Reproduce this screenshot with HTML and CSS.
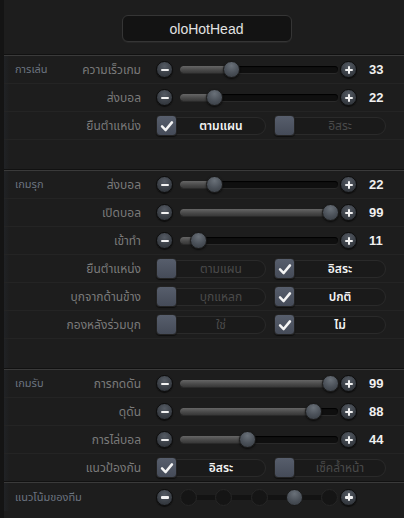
FILE: index.html
```html
<!DOCTYPE html>
<html>
<head>
<meta charset="utf-8">
<link rel="stylesheet" href="styles.css">
</head>
<body>
<div class="app">
  <header class="top"><div class="title">oloHotHead</div></header>

  <section class="group">
    <div class="row">
      <div class="glabel">การเล่น</div>
      <div class="label">ความเร็วเกม</div>
      <div class="ctrl">
        <span class="btn minus"></span>
        <div class="track"><div class="fill" style="width:51px"></div><div class="thumb" style="left:43px"></div></div>
        <span class="btn plus"></span>
        <span class="val">33</span>
      </div>
    </div>
    <div class="row">
      <div class="glabel"></div>
      <div class="label">ส่งบอล</div>
      <div class="ctrl">
        <span class="btn minus"></span>
        <div class="track"><div class="fill" style="width:34px"></div><div class="thumb" style="left:26px"></div></div>
        <span class="btn plus"></span>
        <span class="val">22</span>
      </div>
    </div>
    <div class="row">
      <div class="glabel"></div>
      <div class="label">ยืนตำแหน่ง</div>
      <div class="ctrl">
        <div class="opt on"><span class="box"><svg viewBox="0 0 20 20"><path d="M4.5 10.5 L8.5 14.5 L15.5 6" /></svg></span><span class="otext">ตามแผน</span></div>
        <div class="opt"><span class="box"></span><span class="otext">อิสระ</span></div>
      </div>
    </div>
  </section>

  <section class="group">
    <div class="row">
      <div class="glabel">เกมรุก</div>
      <div class="label">ส่งบอล</div>
      <div class="ctrl">
        <span class="btn minus"></span>
        <div class="track"><div class="fill" style="width:34px"></div><div class="thumb" style="left:26px"></div></div>
        <span class="btn plus"></span>
        <span class="val">22</span>
      </div>
    </div>
    <div class="row">
      <div class="glabel"></div>
      <div class="label">เปิดบอล</div>
      <div class="ctrl">
        <span class="btn minus"></span>
        <div class="track"><div class="fill" style="width:150px"></div><div class="thumb" style="left:142px"></div></div>
        <span class="btn plus"></span>
        <span class="val">99</span>
      </div>
    </div>
    <div class="row">
      <div class="glabel"></div>
      <div class="label">เข้าทำ</div>
      <div class="ctrl">
        <span class="btn minus"></span>
        <div class="track"><div class="fill" style="width:18px"></div><div class="thumb" style="left:10px"></div></div>
        <span class="btn plus"></span>
        <span class="val">11</span>
      </div>
    </div>
    <div class="row">
      <div class="glabel"></div>
      <div class="label">ยืนตำแหน่ง</div>
      <div class="ctrl">
        <div class="opt"><span class="box"></span><span class="otext">ตามแผน</span></div>
        <div class="opt on"><span class="box"><svg viewBox="0 0 20 20"><path d="M4.5 10.5 L8.5 14.5 L15.5 6" /></svg></span><span class="otext">อิสระ</span></div>
      </div>
    </div>
    <div class="row">
      <div class="glabel"></div>
      <div class="label">บุกจากด้านข้าง</div>
      <div class="ctrl">
        <div class="opt"><span class="box"></span><span class="otext">บุกแหลก</span></div>
        <div class="opt on"><span class="box"><svg viewBox="0 0 20 20"><path d="M4.5 10.5 L8.5 14.5 L15.5 6" /></svg></span><span class="otext">ปกติ</span></div>
      </div>
    </div>
    <div class="row">
      <div class="glabel"></div>
      <div class="label">กองหลังร่วมบุก</div>
      <div class="ctrl">
        <div class="opt"><span class="box"></span><span class="otext">ใช่</span></div>
        <div class="opt on"><span class="box"><svg viewBox="0 0 20 20"><path d="M4.5 10.5 L8.5 14.5 L15.5 6" /></svg></span><span class="otext">ไม่</span></div>
      </div>
    </div>
  </section>

  <section class="group tight">
    <div class="row">
      <div class="glabel">เกมรับ</div>
      <div class="label">การกดดัน</div>
      <div class="ctrl">
        <span class="btn minus"></span>
        <div class="track"><div class="fill" style="width:150px"></div><div class="thumb" style="left:142px"></div></div>
        <span class="btn plus"></span>
        <span class="val">99</span>
      </div>
    </div>
    <div class="row">
      <div class="glabel"></div>
      <div class="label">ดุดัน</div>
      <div class="ctrl">
        <span class="btn minus"></span>
        <div class="track"><div class="fill" style="width:133px"></div><div class="thumb" style="left:125px"></div></div>
        <span class="btn plus"></span>
        <span class="val">88</span>
      </div>
    </div>
    <div class="row">
      <div class="glabel"></div>
      <div class="label">การไล่บอล</div>
      <div class="ctrl">
        <span class="btn minus"></span>
        <div class="track"><div class="fill" style="width:67px"></div><div class="thumb" style="left:59px"></div></div>
        <span class="btn plus"></span>
        <span class="val">44</span>
      </div>
    </div>
    <div class="row">
      <div class="glabel"></div>
      <div class="label">แนวป้องกัน</div>
      <div class="ctrl">
        <div class="opt on"><span class="box"><svg viewBox="0 0 20 20"><path d="M4.5 10.5 L8.5 14.5 L15.5 6" /></svg></span><span class="otext">อิสระ</span></div>
        <div class="opt"><span class="box"></span><span class="otext">เซ็คล้ำหน้า</span></div>
      </div>
    </div>
  </section>

  <section class="group last">
    <div class="row wide">
      <div class="glabel long">แนวโน้มของทีม</div>
      <div class="ctrl">
        <span class="btn minus"></span>
        <div class="steps">
          <span class="step"></span>
          <span class="step"></span>
          <span class="step"></span>
          <span class="step cur"></span>
          <span class="step"></span>
        </div>
        <span class="btn plus"></span>
      </div>
    </div>
  </section>
</div>
</body>
</html>
```
FILE: styles.css
```css
* { box-sizing: border-box; }
html, body {
  margin: 0;
  padding: 0;
  background: #1d1d1d;
}
body {
  font-family: "Noto Sans Thai", "Tahoma", "Liberation Sans", "DejaVu Sans", sans-serif;
  color: #8a8a8a;
  width: 404px;
  height: 518px;
  overflow: hidden;
}
.app {
  width: 404px;
  height: 518px;
  border-left: 4px solid #141414;
  background: #1d1d1d;
}
.top {
  height: 55px;
  display: flex;
  justify-content: center;
  padding-top: 15px;
  padding-left: 5px;
}
.title {
  width: 170px;
  height: 27px;
  border: 1px solid #353535;
  border-radius: 6px;
  background: #131313;
  color: #e2e2e2;
  font-family: "Liberation Sans", "Helvetica", sans-serif;
  font-size: 14px;
  display: flex;
  align-items: center;
  justify-content: center;
  box-shadow: 0 1px 0 #262626;
}
.group {
  border-top: 1px solid #3a3a3a;
  box-shadow: 0 -1px 0 #111;
  padding-bottom: 30px;
  background: linear-gradient(90deg, rgba(60,80,110,0.10), rgba(0,0,0,0) 6px);
}
.group.tight, .group.last { padding-bottom: 0; }
.row {
  height: 28px;
  display: grid;
  grid-template-columns: 60px 77px 1fr;
  align-items: center;
  border-bottom: 1px solid #242424;
}
.row.wide { grid-template-columns: 137px 1fr; border-bottom: none; }
.glabel {
  padding-left: 11px;
  font-size: 11px;
  color: #6c7480;
  white-space: nowrap;
}
.label {
  text-align: right;
  font-size: 12px;
  color: #7a7a7a;
  white-space: nowrap;
}
.ctrl {
  display: flex;
  align-items: center;
  padding-left: 15px;
}
.btn {
  width: 17px;
  height: 17px;
  border-radius: 50%;
  background: radial-gradient(circle at 50% 30%, #555b64 0%, #3b4047 55%, #2a2e33 100%);
  border: 1px solid #0d0d0d;
  box-shadow: 0 1px 1px rgba(0,0,0,0.6);
  position: relative;
  flex: none;
}
.btn::before {
  content: "";
  position: absolute;
  left: 3.5px;
  top: 6.5px;
  width: 8px;
  height: 2.5px;
  background: #f2f2f2;
  border-radius: 1px;
}
.btn.plus::after {
  content: "";
  position: absolute;
  left: 6.5px;
  top: 3.5px;
  width: 2.5px;
  height: 8px;
  background: #f2f2f2;
  border-radius: 1px;
}
.track {
  position: relative;
  width: 158px;
  height: 7px;
  margin: 0 2px 0 7px;
  border-radius: 4px;
  background: #0f0f0f;
  box-shadow: inset 0 1px 1px #000, 0 1px 0 #2a2a2a;
}
.fill {
  height: 7px;
  border-radius: 4px;
  background: linear-gradient(#666, #484848 60%, #383838);
}
.thumb {
  position: absolute;
  top: -5px;
  width: 17px;
  height: 17px;
  border-radius: 50%;
  background: radial-gradient(circle at 50% 25%, #6a7179 0%, #4a5058 55%, #363b41 100%);
  border: 1px solid #1a1a1a;
  box-shadow: 0 1px 2px rgba(0,0,0,0.7);
}
.val {
  margin-left: 12px;
  font-family: "Liberation Sans", "Helvetica", sans-serif;
  font-weight: bold;
  font-size: 13px;
  color: #f0f0f0;
}
.opt {
  display: flex;
  align-items: center;
  width: 110px;
  height: 18px;
  border: 1px solid #2a2a2a;
  border-radius: 9px;
  background: #1a1a1a;
  margin-right: 8px;
}
.opt + .opt { width: 112px; }
.box {
  width: 21px;
  height: 21px;
  margin-left: -1px;
  border-radius: 4px;
  background: linear-gradient(#575e6c, #454b58);
  border: 1px solid #232323;
  box-shadow: 0 1px 1px rgba(0,0,0,0.5);
  display: flex;
  align-items: center;
  justify-content: center;
  flex: none;
}
.box svg { width: 18px; height: 18px; }
.box path {
  fill: none;
  stroke: #f4f4f4;
  stroke-width: 2.8;
  stroke-linecap: round;
  stroke-linejoin: round;
}
.otext {
  flex: 1;
  text-align: center;
  font-size: 12px;
  color: #4a4a4a;
  white-space: nowrap;
}
.opt.on .otext {
  color: #f4f4f4;
  font-weight: 600;
}
.steps {
  width: 158px;
  margin: 0 2px 0 7px;
  height: 17px;
  display: flex;
  align-items: center;
  justify-content: space-between;
  background: linear-gradient(#131313, #131313) center / 100% 5px no-repeat;
}
.step {
  width: 17px;
  height: 17px;
  border-radius: 50%;
  background: #151515;
  border: 1px solid #262626;
}
.step.cur {
  background: radial-gradient(circle at 50% 25%, #6a7179 0%, #4a5058 55%, #363b41 100%);
  border-color: #1a1a1a;
}
```
